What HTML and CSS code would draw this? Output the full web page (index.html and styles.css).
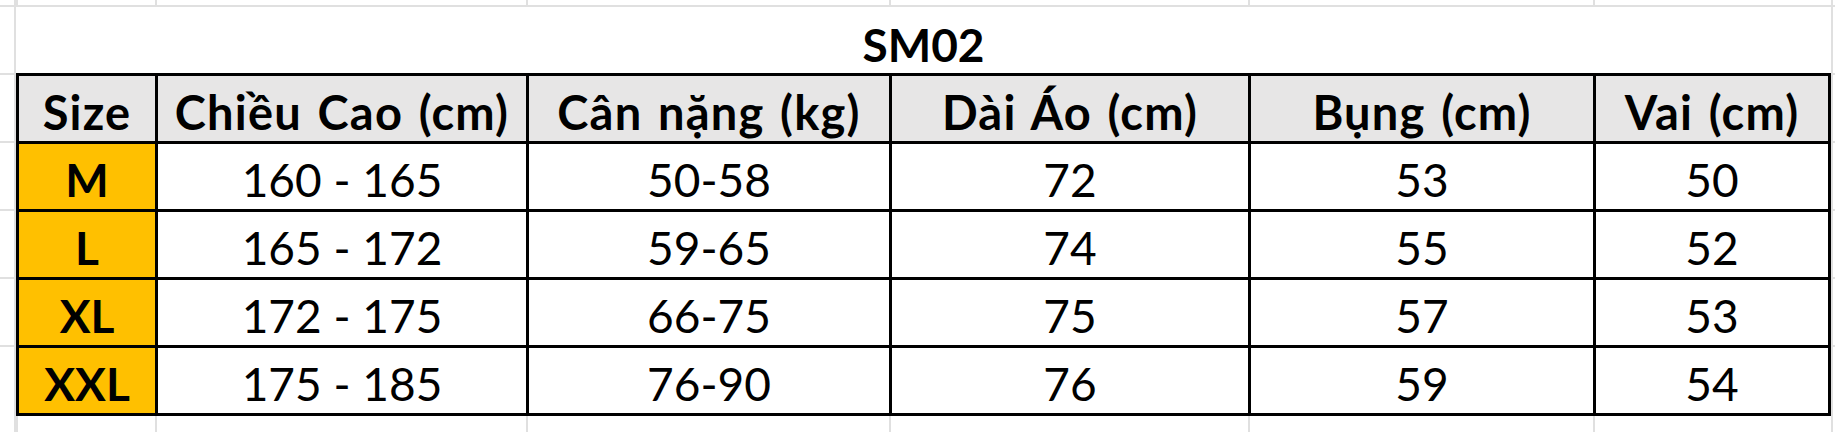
FILE: index.html
```html
<!DOCTYPE html>
<html lang="vi">
<head>
<meta charset="utf-8">
<title>SM02</title>
<link rel="stylesheet" href="styles.css">
</head>
<body>
<div class="sheet">
  <!-- row above -->
  <div class="gc edge-top first"></div>
  <div class="gc edge-top"></div>
  <div class="gc edge-top"></div>
  <div class="gc edge-top"></div>
  <div class="gc edge-top"></div>
  <div class="gc edge-top"></div>
  <div class="gc edge-top"></div>
  <div class="gc edge-top last"></div>

  <!-- title row -->
  <div class="gc side first"></div>
  <div class="title">SM02</div>
  <div class="gc side last"></div>

  <!-- header row -->
  <div class="gc side first"></div>
  <div class="c head">Size</div>
  <div class="c head">Chiều Cao (cm)</div>
  <div class="c head">Cân nặng (kg)</div>
  <div class="c head">Dài Áo (cm)</div>
  <div class="c head">Bụng (cm)</div>
  <div class="c head end">Vai (cm)</div>
  <div class="gc side last"></div>

  <div class="gc side first"></div>
  <div class="c size">M</div>
  <div class="c">160 - 165</div>
  <div class="c">50-58</div>
  <div class="c">72</div>
  <div class="c">53</div>
  <div class="c end">50</div>
  <div class="gc side last"></div>

  <div class="gc side first"></div>
  <div class="c size">L</div>
  <div class="c">165 - 172</div>
  <div class="c">59-65</div>
  <div class="c">74</div>
  <div class="c">55</div>
  <div class="c end">52</div>
  <div class="gc side last"></div>

  <div class="gc side first"></div>
  <div class="c size">XL</div>
  <div class="c">172 - 175</div>
  <div class="c">66-75</div>
  <div class="c">75</div>
  <div class="c">57</div>
  <div class="c end">53</div>
  <div class="gc side last"></div>

  <div class="gc side first"></div>
  <div class="c size bottom">XXL</div>
  <div class="c bottom">175 - 185</div>
  <div class="c bottom">76-90</div>
  <div class="c bottom">76</div>
  <div class="c bottom">59</div>
  <div class="c bottom end">54</div>
  <div class="gc side last"></div>

  <!-- row below -->
  <div class="gc below first"></div>
  <div class="gc below"></div>
  <div class="gc below"></div>
  <div class="gc below"></div>
  <div class="gc below"></div>
  <div class="gc below"></div>
  <div class="gc below"></div>
  <div class="gc below last"></div>
</div>
</body>
</html>
```

FILE: styles.css
```css
html, body {
  margin: 0;
  padding: 0;
  background: #ffffff;
}

.sheet {
  width: 1835px;
  height: 432px;
  overflow: hidden;
  display: grid;
  grid-template-columns: 16px 139px 371px 363px 359px 345px 238px 4px;
  grid-template-rows: 5px 68px 68px 68px 68px 68px 71px 16px;
  font-family: Lato, "Open Sans", sans-serif;
  color: #000;
}

.gc {
  box-sizing: border-box;
  border-left: 2px solid #e0e0e0;
}
.gc.first {
  border-left: none;
  border-right: 2px solid #e0e0e0;
}
.gc.side {
  border-top: 2px solid #e0e0e0;
}
.gc.side.last {
  border-left: 2px solid #e0e0e0;
}

.title {
  grid-column: 2 / 8;
  box-sizing: border-box;
  border-top: 2px solid #e0e0e0;
  display: flex;
  align-items: center;
  justify-content: center;
  padding-top: 9px;
  font-size: 46px;
  font-weight: 700;
}

.c {
  box-sizing: border-box;
  border-left: 3px solid #000;
  border-top: 3px solid #000;
  display: flex;
  align-items: center;
  justify-content: center;
  padding-top: 6px;
  font-size: 46px;
  font-weight: 400;
  white-space: nowrap;
  background: #fff;
}
.c.end {
  border-right: 3px solid #000;
}
.c.bottom {
  border-bottom: 3px solid #000;
}
.c.head {
  background: #e7e6e6;
  font-weight: 700;
  font-size: 47px;
  letter-spacing: 1.2px;
  word-spacing: 3px;
}
.c.size {
  background: #ffc000;
  font-weight: 700;
}
```
